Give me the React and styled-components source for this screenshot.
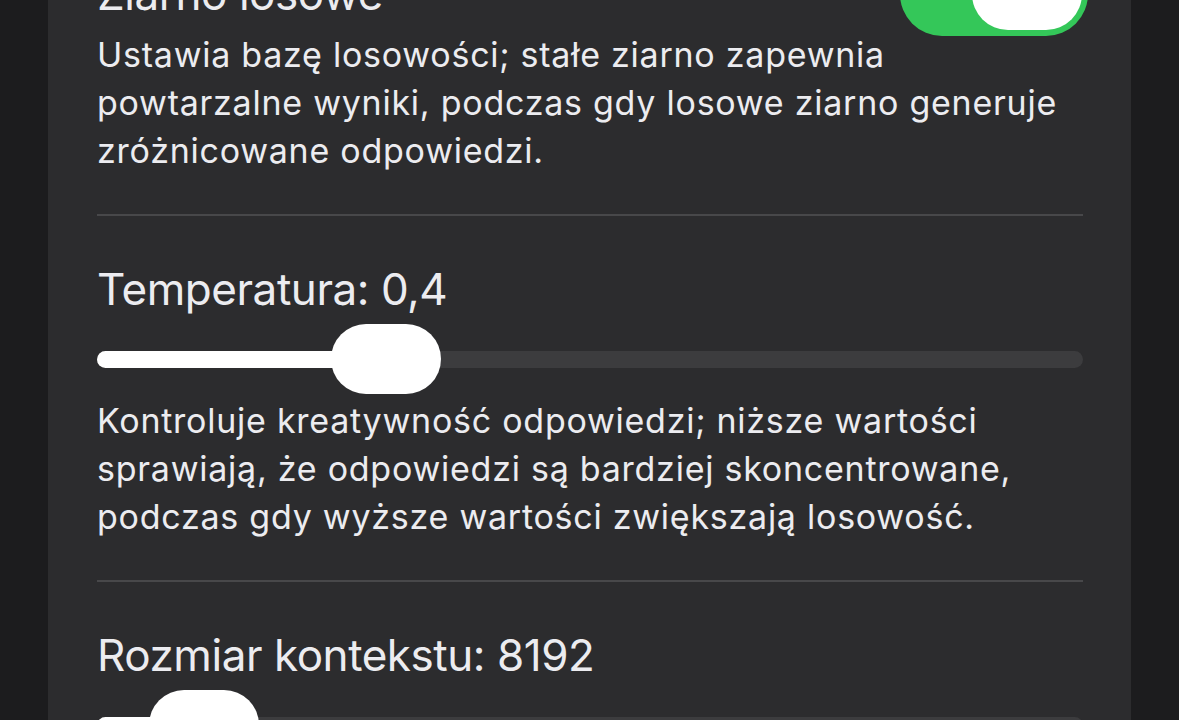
import React, { useState } from 'react'
import styled, { createGlobalStyle } from 'styled-components'

const GlobalStyle = createGlobalStyle`
  html, body {
    margin: 0;
    padding: 0;
    background: #1c1c1e;
  }
  body {
    overflow: hidden;
  }
  * {
    box-sizing: border-box;
  }
`

// slider range helpers
const toFraction = (value, min, max) => (value - min) / (max - min)

function Switch({ on, onChange }) {
  return (
    <SwitchTrack $on={on} onClick={() => onChange(!on)}>
      <SwitchThumb $on={on} />
    </SwitchTrack>
  )
}

function Slider({ value, min, max }) {
  const f = toFraction(value, min, max)
  // thumb centre travels between half a thumb from each end
  const left = `calc(${f} * (100% - 110px))`
  const fill = `calc(${f} * (100% - 110px) + 55px)`
  return (
    <SliderBox>
      <SliderTrack>
        <SliderFill style={{ width: fill }} />
      </SliderTrack>
      <SliderThumb style={{ left }} />
    </SliderBox>
  )
}

export default function App() {
  const [seed, setSeed] = useState(true)

  return (
    <Page>
      <GlobalStyle />
      <Card>
        <Section>
          <TitleRow>
            <Title>Ziarno losowe</Title>
            <Switch on={seed} onChange={setSeed} />
          </TitleRow>
          <Description $gap={10}>
            Ustawia bazę losowości; stałe ziarno zapewnia powtarzalne wyniki, podczas gdy losowe ziarno generuje zróżnicowane odpowiedzi.
          </Description>
        </Section>

        <Section>
          <Title>Temperatura: 0,4</Title>
          <Slider value={0.4} min={0} max={1.5} />
          <Description $gap={3}>
            Kontroluje kreatywność odpowiedzi; niższe wartości sprawiają, że odpowiedzi są bardziej skoncentrowane, podczas gdy wyższe wartości zwiększają losowość.
          </Description>
        </Section>

        <Section>
          <Title>Rozmiar kontekstu: 8192</Title>
          <Slider value={8192} min={512} max={131072} />
        </Section>
      </Card>
    </Page>
  )
}

const Page = styled.div`
  padding: 0 48px;
  min-height: 100vh;
  font-family: Inter, "Liberation Sans", sans-serif;
  color: #ececf0;
`

const Card = styled.div`
  transform: translateY(-79px);
  background: #2c2c2e;
  padding: 0 48px 120px 49px;
`

const Section = styled.div`
  padding: 46px 0 39px;
  border-bottom: 2px solid #48484a;

  &:last-child {
    border-bottom: none;
  }
`

const TitleRow = styled.div`
  display: flex;
  align-items: center;
  justify-content: space-between;
`

const Title = styled.div`
  font-size: 44px;
  line-height: 54px;
  font-weight: 400;
  letter-spacing: -0.45px;
`

const Description = styled.p`
  margin: ${(p) => p.$gap}px 0 0;
  font-size: 34px;
  line-height: 48px;
  letter-spacing: 0.75px;
`

const SwitchTrack = styled.div`
  flex: none;
  position: relative;
  width: 188px;
  height: 84px;
  margin: -15px -5px -15px 0;
  border-radius: 42px;
  background: ${(p) => (p.$on ? '#34c759' : '#39393d')};
  cursor: pointer;
`

const SwitchThumb = styled.div`
  position: absolute;
  top: 6px;
  left: ${(p) => (p.$on ? '72px' : '6px')};
  width: 110px;
  height: 72px;
  border-radius: 36px;
  background: #fff;
`

const SliderBox = styled.div`
  position: relative;
  height: 70px;
  margin-top: 8px;
  display: flex;
  align-items: center;
`

const SliderTrack = styled.div`
  width: 100%;
  height: 17px;
  border-radius: 9px;
  background: #3c3c3e;
  overflow: hidden;
`

const SliderFill = styled.div`
  height: 100%;
  background: #fff;
`

const SliderThumb = styled.div`
  position: absolute;
  top: 0;
  width: 110px;
  height: 70px;
  border-radius: 35px;
  background: #fff;
`
